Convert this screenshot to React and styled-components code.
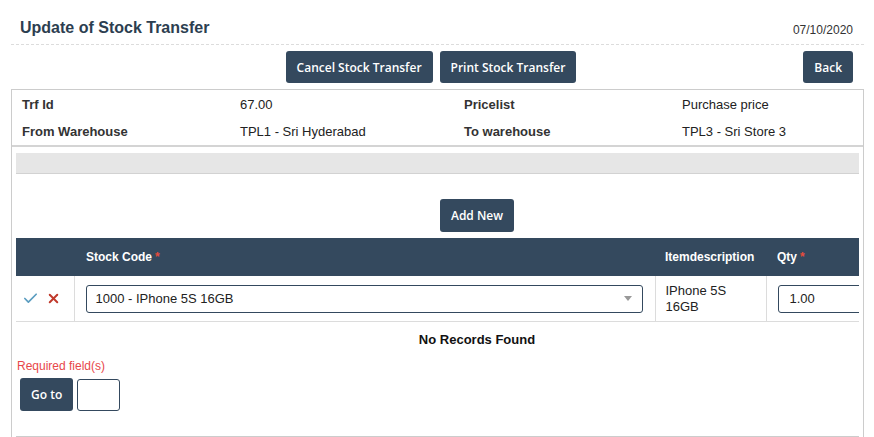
import React from 'react';
import styled, { createGlobalStyle } from 'styled-components';
import { Check, X } from 'lucide-react';

const GlobalStyle = createGlobalStyle`
  body {
    margin: 0;
    background: #fff;
    font-family: "Liberation Sans", Arial, sans-serif;
    color: #222;
  }
`;

const Page = styled.div`
  width: 853px;
  margin-left: 11px;
`;

const Header = styled.div`
  display: flex;
  justify-content: space-between;
  align-items: center;
  padding: 18px 11px 6px 9px;
  border-bottom: 1px dashed #dcdcdc;
`;

const Title = styled.h1`
  margin: 0;
  font-size: 16px;
  line-height: 20px;
  font-weight: bold;
  color: #2c3e50;
`;

const DateText = styled.span`
  font-size: 12px;
  color: #333;
  padding-top: 3px;
`;

const Toolbar = styled.div`
  display: grid;
  grid-template-columns: 1fr auto 1fr;
  align-items: center;
  padding: 6px 11px 6px 0;
`;

const Group = styled.div`
  display: flex;
  gap: 7px;
  grid-column: 2;
  margin-left: -2px;
`;

const Button = styled.button`
  height: ${p => p.$h ?? 32}px;
  padding: 0 ${p => p.$px ?? 11}px;
  background: #34495e;
  color: #fff;
  border: none;
  border-radius: 3px;
  font-family: "Open Sans", sans-serif;
  font-size: 12px;
  font-weight: 600;
  cursor: pointer;
  white-space: nowrap;
`;

const BackButton = styled(Button)`
  justify-self: end;
`;

const Panel = styled.div`
  border: 1px solid #ccc;
  border-bottom: none;
`;

const InfoGrid = styled.div`
  display: grid;
  grid-template-columns: 218px 224px 218px 1fr;
  padding: 1px 0 0 10px;
  border-bottom: 2px solid #d4d4d4;
`;

const InfoCell = styled.div`
  font-size: 13px;
  line-height: 27px;
  font-weight: ${p => (p.$label ? 'bold' : 'normal')};
  color: ${p => (p.$label ? '#333' : '#222')};
`;

const Inner = styled.div`
  margin: 0 4px;
  padding-top: 6px;
  border-bottom: 1px solid #ccc;
  padding-bottom: 25px;
`;

const GreyBar = styled.div`
  height: 20px;
  background: #e6e6e6;
  border-bottom: 1px solid #d2d2d2;
`;

const Scroller = styled.div`
  overflow: hidden;
`;

const Wide = styled.div`
  width: 922px;
`;

const AddRow = styled.div`
  display: flex;
  justify-content: center;
  padding: 25px 0 6px;
`;

const Table = styled.table`
  width: 922px;
  table-layout: fixed;
  border-collapse: collapse;
`;

const Th = styled.th`
  background: #34495e;
  color: #fff;
  height: 38px;
  padding: 0 ${p => p.$pl ?? 11}px;
  text-align: left;
  font-size: 12px;
  font-weight: bold;
  white-space: nowrap;
`;

const Star = styled.span`
  color: #e74c3c;
  margin-left: 3px;
`;

const Td = styled.td`
  height: 45px;
  padding: 0 ${p => p.$pr ?? 0}px 0 ${p => p.$pl ?? 11}px;
  border-bottom: 1px solid #dcdcdc;
  border-left: ${p => (p.$first ? 'none' : '1px solid #dcdcdc')};
  font-size: 13px;
  line-height: 16px;
  vertical-align: middle;
  overflow: hidden;
`;

const Actions = styled.div`
  display: flex;
  align-items: center;
  gap: 7px;
  padding-left: 6px;
`;

const SelectBox = styled.div`
  height: 26px;
  border: 1px solid #34495e;
  border-radius: 3px;
  display: flex;
  align-items: center;
  justify-content: space-between;
  padding: 0 10px 0 9px;
  font-size: 13px;
  color: #222;
`;

const Caret = styled.span`
  width: 0;
  height: 0;
  border-left: 4px solid transparent;
  border-right: 4px solid transparent;
  border-top: 5px solid #999;
`;

const QtyInput = styled.div`
  height: 26px;
  border: 1px solid #34495e;
  border-radius: 3px;
  display: flex;
  align-items: center;
  padding-left: 11px;
  font-size: 13px;
  color: #222;
`;

const NoRecords = styled.div`
  text-align: center;
  font-size: 13px;
  font-weight: bold;
  color: #111;
  padding: 10px 0 0;
  line-height: 16px;
`;

const Required = styled.div`
  font-size: 12px;
  color: #e8474a;
  padding: 11px 0 0 1px;
  line-height: 14px;
`;

const GoRow = styled.div`
  display: flex;
  align-items: flex-start;
  gap: 4px;
  padding: 5px 0 0 4px;
`;

const PageInput = styled.div`
  width: 41px;
  height: 30px;
  margin-top: 1px;
  border: 1px solid #34495e;
  border-radius: 3px;
`;

export default function App() {
  return (
    <>
      <GlobalStyle />
      <Page>
        <Header>
          <Title>Update of Stock Transfer</Title>
          <DateText>07/10/2020</DateText>
        </Header>
        <Toolbar>
          <Group>
            <Button>Cancel Stock Transfer</Button>
            <Button>Print Stock Transfer</Button>
          </Group>
          <BackButton>Back</BackButton>
        </Toolbar>
        <Panel>
          <InfoGrid>
            <InfoCell $label>Trf Id</InfoCell>
            <InfoCell>67.00</InfoCell>
            <InfoCell $label>Pricelist</InfoCell>
            <InfoCell>Purchase price</InfoCell>
            <InfoCell $label>From Warehouse</InfoCell>
            <InfoCell>TPL1 - Sri Hyderabad</InfoCell>
            <InfoCell $label>To warehouse</InfoCell>
            <InfoCell>TPL3 - Sri Store 3</InfoCell>
          </InfoGrid>
          <Inner>
            <GreyBar />
            <Scroller>
              <Wide>
                <AddRow>
                  <Button $h={33}>Add New</Button>
                </AddRow>
                <Table>
                  <colgroup>
                    <col style={{ width: 58 }} />
                    <col style={{ width: 581 }} />
                    <col style={{ width: 111 }} />
                    <col style={{ width: 172 }} />
                  </colgroup>
                  <thead>
                    <tr>
                      <Th />
                      <Th $pl={12}>Stock Code<Star>*</Star></Th>
                      <Th $pl={10}>Itemdescription</Th>
                      <Th $pl={11}>Qty<Star>*</Star></Th>
                    </tr>
                  </thead>
                  <tbody>
                    <tr>
                      <Td $first $pl={0}>
                        <Actions>
                          <Check size={17} color="#5b9dc0" strokeWidth={2.4} />
                          <X size={15} color="#c0392b" strokeWidth={3.2} />
                        </Actions>
                      </Td>
                      <Td $pl={11} $pr={12}>
                        <SelectBox>
                          <span>1000 - IPhone 5S 16GB</span>
                          <Caret />
                        </SelectBox>
                      </Td>
                      <Td $pl={10}>IPhone 5S<br />16GB</Td>
                      <Td $pl={11} $pr={12}>
                        <QtyInput>1.00</QtyInput>
                      </Td>
                    </tr>
                  </tbody>
                </Table>
                <NoRecords>No Records Found</NoRecords>
              </Wide>
            </Scroller>
            <Required>Required field(s)</Required>
            <GoRow>
              <Button $h={33} $px={11}>Go to</Button>
              <PageInput />
            </GoRow>
          </Inner>
        </Panel>
      </Page>
    </>
  );
}
